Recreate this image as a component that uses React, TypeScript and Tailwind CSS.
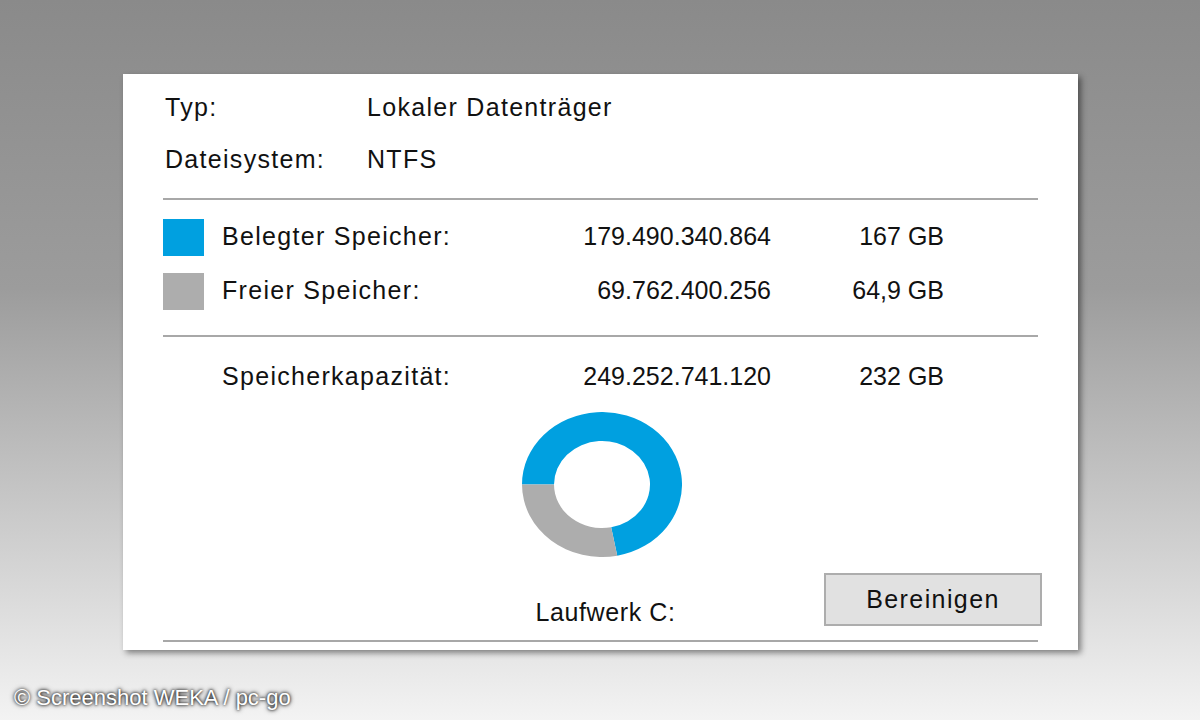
import React from "react"

const rows = [
  { color: "bg-[#00a0e0]", label: "Belegter Speicher:", bytes: "179.490.340.864", size: "167 GB" },
  { color: "bg-[#adadad]", label: "Freier Speicher:", bytes: "69.762.400.256", size: "64,9 GB" },
]

const Donut = () => (
  <svg width="160" height="145" viewBox="0 0 160 145">
    <path
      d="M 0 72.5 A 80 72.5 0 1 1 95.26 143.67 L 89.16 115.2 A 48 43.5 0 1 0 32 72.5 Z"
      fill="#00a0e0"
    />
    <path
      d="M 95.26 143.67 A 80 72.5 0 0 1 0 72.5 L 32 72.5 A 48 43.5 0 0 0 89.16 115.2 Z"
      fill="#adadad"
    />
  </svg>
)

export default function App() {
  return (
    <div className="relative h-[720px] w-[1200px] overflow-hidden bg-[linear-gradient(to_bottom,#8a8a8a_0%,#9c9c9c_40%,#f3f3f3_100%)] font-['Liberation_Sans',Arial,sans-serif] text-[#111]">
      <div className="pt-[74px] pl-[123px]">
        <div className="flex w-[955px] flex-col bg-white px-[40px] pt-[8px] pb-[8px] text-[25px] shadow-[3px_3px_6px_rgba(0,0,0,0.45)]">
          {/* general info */}
          <div className="flex h-[52px] items-center pl-[2px] tracking-[1.3px]">
            <span className="w-[202px]">Typ:</span>
            <span>Lokaler Datenträger</span>
          </div>
          <div className="flex h-[52px] items-center pl-[2px] tracking-[1.3px]">
            <span className="w-[202px]">Dateisystem:</span>
            <span>NTFS</span>
          </div>
          <div className="mt-[12px] h-[2px] bg-[#a8a8a8]" />

          {/* usage */}
          <div className="mt-[10px] flex flex-col">
            {rows.map((r, i) => (
              <div key={i} className="flex h-[54px] items-center">
                <div className={`h-[37px] w-[41px] ${r.color}`} />
                <span className="ml-[18px] w-[349px] tracking-[1.3px]">{r.label}</span>
                <span className="w-[200px] text-right">{r.bytes}</span>
                <span className="w-[173px] text-right">{r.size}</span>
              </div>
            ))}
          </div>
          <div className="mt-[17px] h-[2px] bg-[#a8a8a8]" />

          <div className="mt-[13px] flex h-[54px] items-center pl-[59px]">
            <span className="w-[349px] tracking-[1.3px]">Speicherkapazität:</span>
            <span className="w-[200px] text-right">249.252.741.120</span>
            <span className="w-[173px] text-right">232 GB</span>
          </div>

          <div className="mt-[8px] flex justify-center pl-[2px]">
            <Donut />
          </div>

          <div className="mt-[16px] grid grid-cols-[1fr_auto_1fr] items-end">
            <div />
            <span className="pl-[10px] leading-[28px] tracking-[0.6px]">Laufwerk C:</span>
            <div className="-mr-[4px] flex justify-end">
              <button className="h-[53px] w-[218px] border-2 border-[#adadad] bg-[#e1e1e1] text-[25px] tracking-[1.4px]">
                Bereinigen
              </button>
            </div>
          </div>
          <div className="mt-[14px] h-[2px] bg-[#a8a8a8]" />
        </div>
      </div>

      <div className="pt-[31px] pl-[14px] text-[22px] text-white [text-shadow:0_0_3px_#000,0_0_5px_#333]">
        © Screenshot WEKA / pc-go
      </div>
    </div>
  )
}
